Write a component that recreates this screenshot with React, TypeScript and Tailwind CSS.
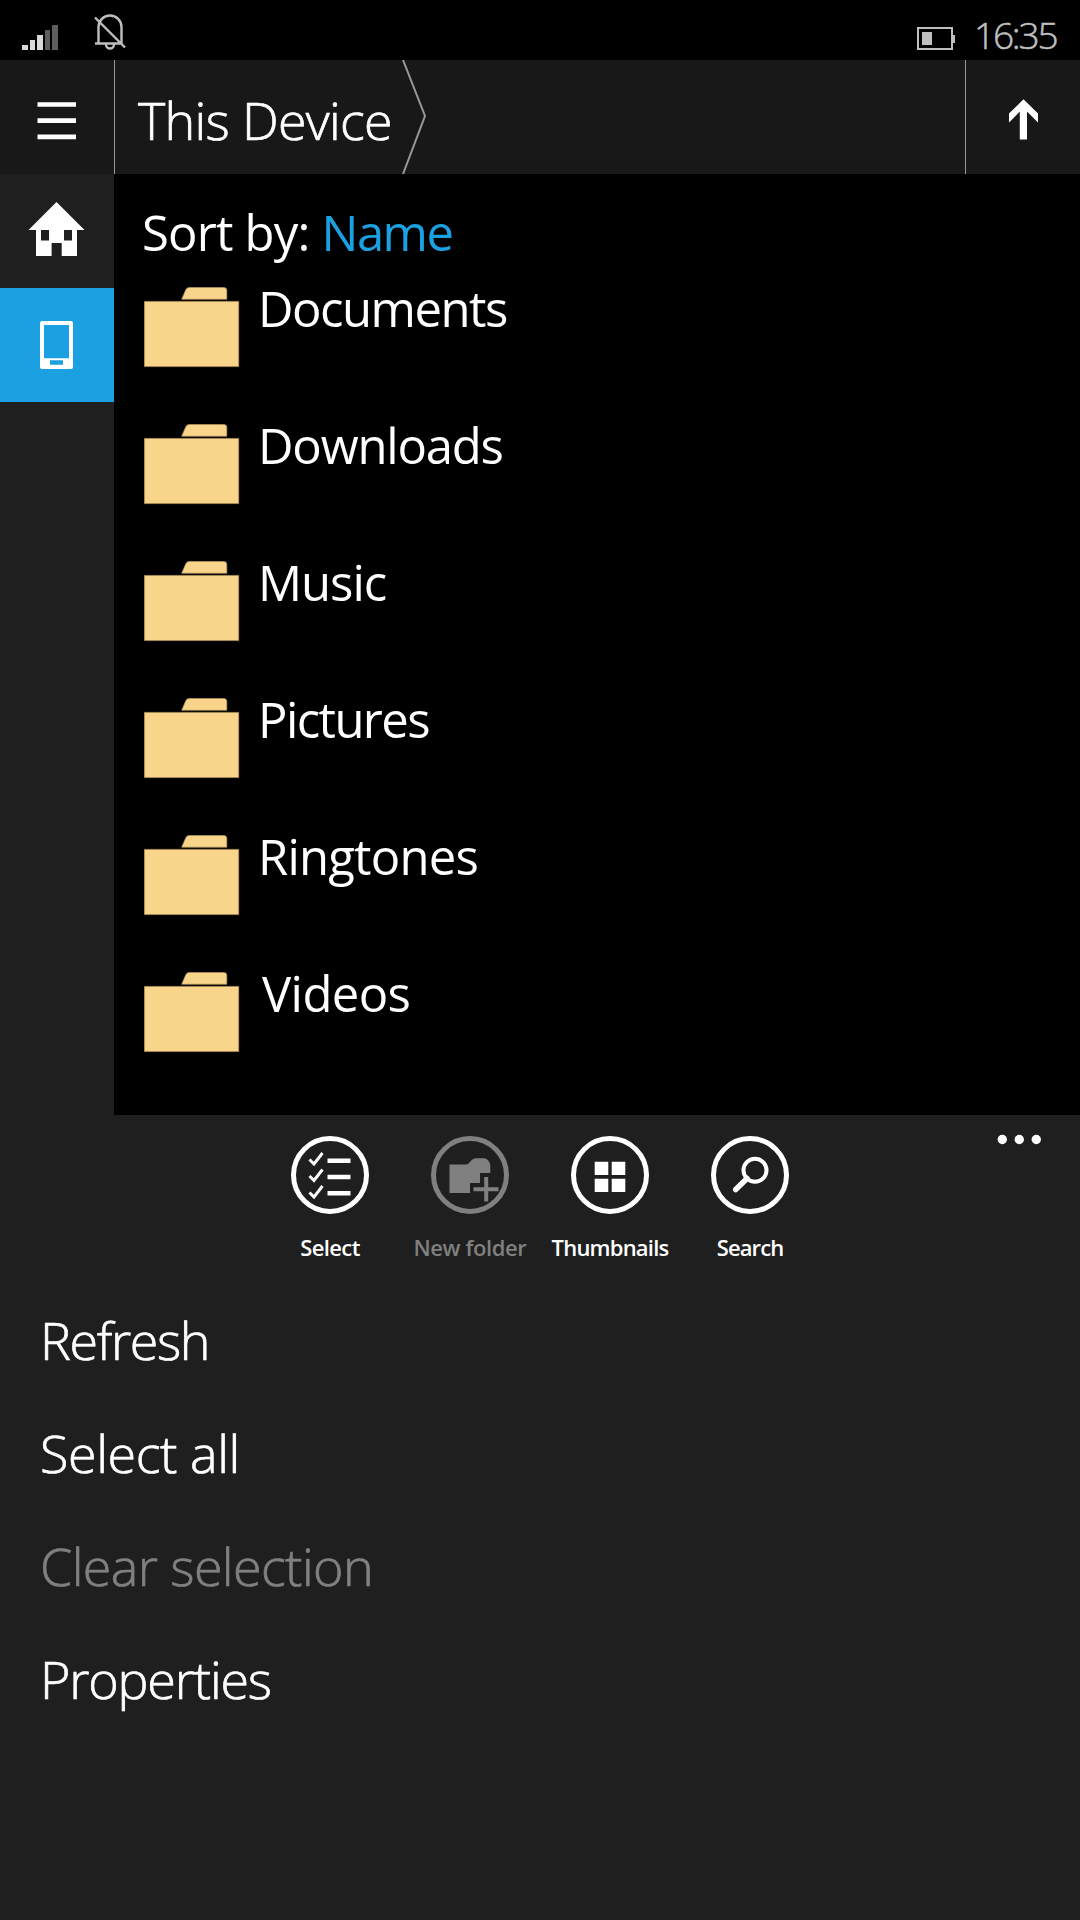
import { useState, ReactNode } from 'react';

interface Folder {
  name: string;
  className: string;
}

interface MenuEntry {
  label: string;
  className: string;
  disabled?: boolean;
}

interface AppBarButtonProps {
  label: string;
  className: string;
  disabled?: boolean;
  children: ReactNode;
}

const folders: Folder[] = [
  { name: 'Documents', className: 'tracking-[-1.5px]' },
  { name: 'Downloads', className: 'tracking-[-1.2px]' },
  { name: 'Music', className: 'tracking-[-1px]' },
  { name: 'Pictures', className: 'tracking-[-1.6px]' },
  { name: 'Ringtones', className: 'tracking-[-0.8px]' },
  { name: 'Videos', className: 'pl-[4px] tracking-[-0.6px]' },
];

const menuEntries: MenuEntry[] = [
  { label: 'Refresh', className: 'tracking-[-1.4px]' },
  { label: 'Select all', className: 'tracking-[-0.4px]' },
  { label: 'Clear selection', className: 'tracking-[-0.6px]', disabled: true },
  { label: 'Properties', className: 'tracking-[-1.2px]' },
];

function StatusBar() {
  return (
    <div className="flex h-[60px] items-start bg-black text-[#bfbfbf]">
      <svg width="140" height="60" viewBox="0 0 140 60" fill="none">
        <path d="M22 45h6v5h-6zM30 40h5v10h-5zM37 35h6v15h-6z" fill="#d9d9d9" />
        <path d="M45 30h5v20h-5zM52 25h6v25h-6z" fill="#5e5e5e" />
        <path
          d="M95 43.5h27M98.5 43.5V27a11.5 11.5 0 0 1 23 0v16.5M106 44.5a4 4 0 0 0 8 0M95 17.5l30 30"
          stroke="currentColor"
          strokeWidth="2.4"
        />
      </svg>
      <div className="ml-auto flex">
        <svg width="50" height="60" viewBox="0 0 50 60" fill="none">
          <path d="M9 28h34v21H9z" stroke="currentColor" strokeWidth="2" />
          <path d="M13 32h10v13H13zM44 35h2v8h-2z" fill="currentColor" />
        </svg>
        <div className="ml-[15px] w-[106px] pt-[8px] text-[37px] leading-[53px] font-light tracking-[-2.2px] [-webkit-text-stroke:0.5px_currentColor]">
          16:35
        </div>
      </div>
    </div>
  );
}

function FolderIcon() {
  return (
    <svg width="96" height="82" viewBox="0 0 96 82" fill="#f9d58b" stroke="#b89a5c" strokeWidth="0.7">
      <path d="M37.7 12.2l4-9.3q1-2.4 3.6-2.4h34.5q3 0 3 3v8.7z" />
      <path d="M0.4 14.4h94.3v65.2H0.4z" />
    </svg>
  );
}

function AppBarButton({ label, className, disabled, children }: AppBarButtonProps) {
  return (
    <button
      disabled={disabled}
      className={`flex w-[140px] flex-col items-center whitespace-nowrap ${disabled ? 'text-[#808080]' : 'text-white'}`}
    >
      <svg width="80" height="80" viewBox="0 0 80 80" fill="none" stroke="currentColor">
        <circle cx="40" cy="40" r="36.5" strokeWidth="5" />
        {children}
      </svg>
      <span className={`mt-[17px] text-[22px] leading-[30px] font-semibold ${className}`}>{label}</span>
    </button>
  );
}

export default function App() {
  const [selected, setSelected] = useState('device');

  return (
    <div className="flex h-[1920px] w-[1080px] flex-col overflow-hidden bg-[#1f1f1f] font-['Open_Sans','Noto_Sans',sans-serif] text-white">
      <StatusBar />

      <header className="flex h-[114px] bg-[#181818]">
        <button className="w-[114px]">
          <svg width="114" height="114" viewBox="0 0 114 114" fill="currentColor">
            <path d="M37.5 42.3h38.5v4.4H37.5zM37.5 58.3h38.5v4.6H37.5zM37.5 74.6h38.5v4.6H37.5z" />
          </svg>
        </button>
        <div className="flex flex-1 border-x border-[#999999]">
          <div className="ml-[23px] w-[264px] pt-[3px] text-[52px] leading-[114px] font-light tracking-[-0.7px] whitespace-nowrap [-webkit-text-stroke:0.7px_currentColor]">
            This Device
          </div>
          <svg width="26" height="114" viewBox="0 0 26 114" fill="none">
            <path d="M1 0l22 56L1 114" stroke="#999999" strokeWidth="2" />
          </svg>
        </div>
        <button className="w-[114px]">
          <svg width="114" height="114" viewBox="0 0 114 114" fill="currentColor">
            <path d="M57.5 39.3l14.5 14.3v8.8L61 51.6v27.8h-7.2V51.6L43 62.4v-8.8z" />
          </svg>
        </button>
      </header>

      <div className="flex h-[941px]">
        <nav className="flex w-[114px] flex-col">
          <button
            onClick={() => setSelected('home')}
            className={`h-[114px] w-[114px] ${selected === 'home' ? 'bg-[#1ba1e2]' : ''}`}
          >
            <svg width="114" height="114" viewBox="0 0 114 114" fill="currentColor" fillRule="evenodd">
              <path d="M56.5 28L84.5 56H77v26H61.7V69H51.6v13H36V56h-7.5zM41 56v10.5h8V56zM64 56v10.5h8V56z" />
            </svg>
          </button>
          <button
            onClick={() => setSelected('device')}
            className={`h-[114px] w-[114px] ${selected === 'device' ? 'bg-[#1ba1e2]' : ''}`}
          >
            <svg width="114" height="114" viewBox="0 0 114 114" fill="currentColor" fillRule="evenodd">
              <path d="M42 33h29q2 0 2 2v44q0 2-2 2H42q-2 0-2-2V35q0-2 2-2zM44 37v33.3h25V37zM50 72.3v4.4h13v-4.4z" />
            </svg>
          </button>
        </nav>

        <main className="flex-1 bg-black pl-[30px]">
          <div className="-ml-[2px] h-[113px] pt-[2px] text-[49px] leading-[113px] whitespace-nowrap">
            <span className="tracking-[-0.8px]">Sort by: </span>
            <span className="tracking-[-1.5px] text-[#1ba1e2]">Name</span>
          </div>
          <ul>
            {folders.map((folder) => (
              <li key={folder.name} className="flex h-[137px] items-start gap-[18px]">
                <FolderIcon />
                <span className={`text-[49px] leading-[42px] ${folder.className}`}>{folder.name}</span>
              </li>
            ))}
          </ul>
        </main>
      </div>

      <footer className="relative">
        <div className="flex justify-center pt-[20px]">
          <AppBarButton label="Select" className="tracking-[-0.6px]">
            <path
              d="M19.5 24.5l4.5 4.5 8.5-11M19.5 41l4.5 4.5 8.5-11M19.5 57.5l4.5 4.5 8.5-11"
              strokeWidth="2.9"
            />
            <path d="M37.5 25.7h23M37.5 42h23M37.5 58.3h23" strokeWidth="4.4" />
          </AppBarButton>
          <AppBarButton label="New folder" className="tracking-[-0.4px]" disabled>
            <path
              d="M19.5 29.5H36q2 0 3.5-2l2-2.2q1.8-2 4.5-2h8q2.5 0 4 2l1.5 2.2q.8 1 .8 2.5v8H50v10H40v10H19.5z"
              fill="currentColor"
              stroke="none"
            />
            <path d="M43.5 54.3h25M56.2 42v24.5" strokeWidth="4" />
          </AppBarButton>
          <AppBarButton label="Thumbnails" className="tracking-[-0.8px]">
            <path
              d="M24.7 26.7h13.6v13.3H24.7zM41.7 26.7h13.6v13.3H41.7zM24.7 43.7h13.6V57H24.7zM41.7 43.7h13.6V57H41.7z"
              fill="currentColor"
              stroke="none"
            />
          </AppBarButton>
          <AppBarButton label="Search" className="tracking-[-0.9px]">
            <circle cx="45" cy="35.3" r="11.5" strokeWidth="4" />
            <path d="M37 43.5L25.7 54.5" strokeWidth="5.5" strokeLinecap="round" />
          </AppBarButton>
        </div>
        {/* overflow dots sit over the right end of the bar */}
        <svg className="absolute top-[19px] right-[37px]" width="46" height="11" viewBox="0 0 46 11" fill="currentColor">
          <circle cx="5.3" cy="5.5" r="4.7" />
          <circle cx="22.3" cy="5.5" r="4.7" />
          <circle cx="39.3" cy="5.5" r="4.7" />
        </svg>
        <ul className="mt-[21px] pl-[40px]">
          {menuEntries.map((entry) => (
            <li
              key={entry.label}
              className={`h-[113px] text-[52px] leading-[113px] font-light [-webkit-text-stroke:0.7px_currentColor] ${entry.disabled ? 'text-[#808080]' : ''}`}
            >
              <span className={entry.className}>{entry.label}</span>
            </li>
          ))}
        </ul>
      </footer>
    </div>
  );
}
